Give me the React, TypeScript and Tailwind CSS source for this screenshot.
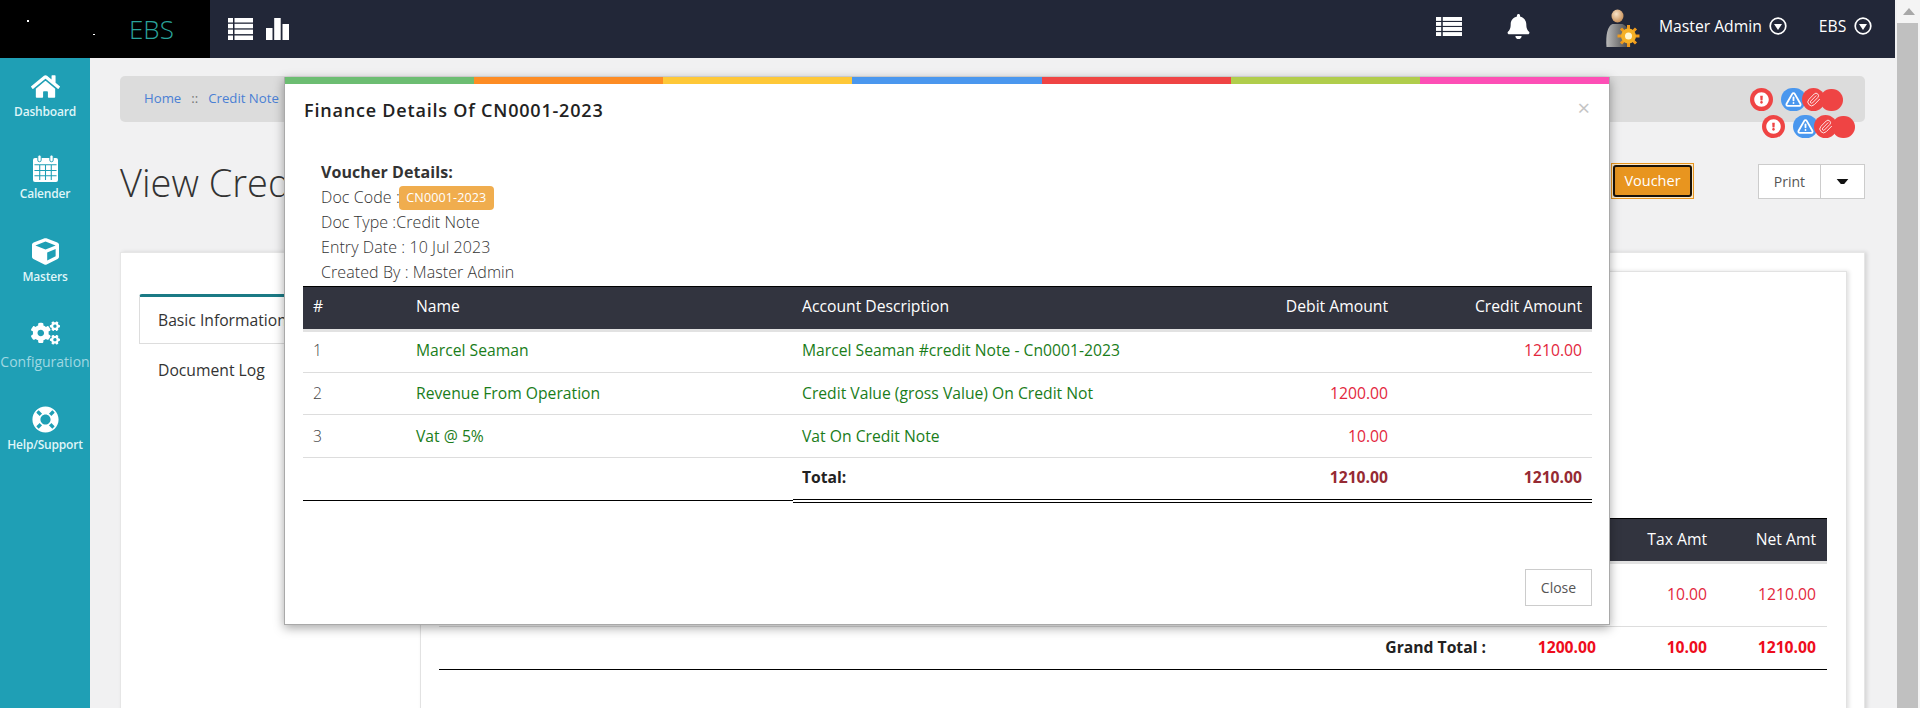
import { FaBell, FaCogs, FaCube, FaExclamationCircle, FaHome, FaLifeRing } from "react-icons/fa";
import { Paperclip, TriangleAlert } from "lucide-react";

const stripes = ["bg-[#6cbd72]", "bg-[#fd8c24]", "bg-[#fec838]", "bg-[#4a97ee]", "bg-[#ef4444]", "bg-[#b0cd4c]", "bg-[#fd4fb6]"];

const voucherRows = [
  { no: "1", name: "Marcel Seaman", desc: "Marcel Seaman #credit Note - Cn0001-2023", debit: "", credit: "1210.00", height: "h-[44px]" },
  { no: "2", name: "Revenue From Operation", desc: "Credit Value (gross Value) On Credit Not", debit: "1200.00", credit: "", height: "h-[42px]" },
  { no: "3", name: "Vat @ 5%", desc: "Vat On Credit Note", debit: "10.00", credit: "", height: "h-[43px]" },
];

function ListIcon({ className }: { className?: string }) {
  return (
    <svg viewBox="0 0 25 22" className={className} fill="currentColor" preserveAspectRatio="none">
      <rect x="0" y="0" width="5" height="4.5" />
      <rect x="6.5" y="0" width="18.5" height="4.5" />
      <rect x="0" y="5.8" width="5" height="4.5" />
      <rect x="6.5" y="5.8" width="18.5" height="4.5" />
      <rect x="0" y="11.6" width="5" height="4.5" />
      <rect x="6.5" y="11.6" width="18.5" height="4.5" />
      <rect x="0" y="17.5" width="5" height="4.5" />
      <rect x="6.5" y="17.5" width="18.5" height="4.5" />
    </svg>
  );
}

function CircleDown() {
  return (
    <svg viewBox="0 0 18 18" className="h-[18px] w-[18px] text-white">
      <circle cx="9" cy="9" r="7.8" fill="none" stroke="currentColor" strokeWidth="1.7" />
      <path d="M5 7h8l-4 6z" fill="currentColor" />
    </svg>
  );
}

function AdminAvatar() {
  return (
    <svg viewBox="0 0 35 40" className="h-10 w-[36px]">
      <defs>
        <linearGradient id="body" x1="0" y1="0" x2="1" y2="0">
          <stop offset="0" stopColor="#b9b9b9" />
          <stop offset="1" stopColor="#3f3f3f" />
        </linearGradient>
        <radialGradient id="head" cx="0.4" cy="0.35" r="0.7">
          <stop offset="0" stopColor="#f8e3c8" />
          <stop offset="1" stopColor="#c58b52" />
        </radialGradient>
      </defs>
      <ellipse cx="12" cy="7" rx="6" ry="6.5" fill="url(#head)" />
      <path d="M1 38c-1-12 1-21 6-23h10c5 2 8 8 8 23z" fill="url(#body)" />
      <g stroke="#ef9a1c" strokeWidth="3">
        <path d="M23 16v22M12 27h22M15.500 19.500l15 15M30.500 19.500l-15 15" />
      </g>
      <circle cx="23" cy="27" r="7.500" fill="#f5b026" />
      <circle cx="23" cy="27" r="3.500" fill="#fff6cf" />
    </svg>
  );
}

function NoticeDots() {
  return (
    <div className="flex h-[23px] items-center">
      <span className="flex h-[23px] w-[23px] items-center justify-center rounded-full bg-[#ef4444] text-[15px] text-white">
        <FaExclamationCircle />
      </span>
      <span className="ml-2 flex h-[23px] w-[25px] items-center justify-center rounded-full bg-[#4a97ee] text-white">
        <TriangleAlert size={17} strokeWidth={2.6} />
      </span>
      <span className="-ml-1 flex h-[23px] w-[23px] items-center justify-center rounded-full bg-[#ef4444] text-[#ffe3e3]">
        <Paperclip size={15} strokeWidth={1.6} />
      </span>
      <span className="-ml-[5px] h-[22px] w-[23px] rounded-full bg-[#ef4444]" />
    </div>
  );
}

function SideItem({ label, icon, className }: { label: string; icon: React.ReactNode; className?: string }) {
  return (
    <div className={`flex flex-col items-center ${className ?? ""}`}>
      <div className="flex h-[28px] items-center text-white">{icon}</div>
      <span className="mt-[3px] whitespace-nowrap text-[12px] font-semibold leading-[18px] tracking-[-0.2px] text-[#dff5f8]">{label}</span>
    </div>
  );
}

export default function App() {
  return (
    <div className="relative flex h-[708px] w-[1920px] overflow-hidden bg-[#f1f1f2] font-['Open_Sans',sans-serif] text-[#333]">
      <div className="flex w-[1897px] flex-col">
        {/* top bar */}
        <header className="mr-[2px] flex h-[58px] shrink-0 items-center bg-[#222738] text-white">
          <div className="relative flex h-full w-[210px] items-center bg-black pl-[129px]">
            <span className="absolute left-[27px] top-[20px] h-[2px] w-[2px] bg-white" />
            <span className="absolute left-[93px] top-[34px] h-px w-[2px] bg-white" />
            <span className="text-[26px] font-light leading-none text-[#2aa39b]">EBS</span>
          </div>
          <ListIcon className="ml-[18px] h-[22px] w-[25px]" />
          <svg viewBox="0 0 23 22" className="ml-[13px] h-[22px] w-[23px]" fill="currentColor">
            <rect x="0" y="10" width="6.500" height="12" />
            <rect x="8.200" y="0" width="6.500" height="22" />
            <rect x="16.500" y="6" width="6.500" height="16" />
          </svg>
          <ListIcon className="ml-[1147px] -mt-[6px] h-[19px] w-[26px]" />
          <FaBell className="ml-[44px] -mt-[6px] text-[25px]" />
          <div className="ml-[74px]">
            <AdminAvatar />
          </div>
          <span className="ml-[18px] -mt-[4px] text-[15.7px] leading-none">Master Admin</span>
          <div className="ml-[7px] -mt-[6px] flex">
            <CircleDown />
          </div>
          <span className="ml-[32px] -mt-[4px] text-[15.7px] leading-none">EBS</span>
          <div className="ml-[8px] -mt-[6px] flex">
            <CircleDown />
          </div>
        </header>

        <div className="flex min-h-0 flex-1">
          {/* side menu */}
          <nav className="w-[90px] shrink-0 bg-[#1f9fb5] pt-[14px]">
            <SideItem label="Dashboard" icon={<FaHome className="text-[29px]" />} />
            <SideItem className="mt-[33px]" label="Calender" icon={
              <svg viewBox="0 0 26 28" className="h-[27px] w-[25px]">
                <path d="M2 3h22a2 2 0 0 1 2 2v21a2 2 0 0 1-2 2H2a2 2 0 0 1-2-2V5a2 2 0 0 1 2-2z" fill="currentColor" />
                <rect x="5" y="0" width="3.500" height="7" rx="1.700" fill="currentColor" stroke="#1f9fb5" />
                <rect x="17.500" y="0" width="3.500" height="7" rx="1.700" fill="currentColor" stroke="#1f9fb5" />
                <path d="M1.500 10h23M1.500 16h23M1.500 21.500h23M7 10v16M13 10v16M19 10v16" stroke="#1f9fb5" strokeWidth="1.100" />
              </svg>
            } />
            <SideItem className="mt-[34px]" label="Masters" icon={<FaCube className="text-[27px]" />} />
            <div className="mt-[33px] flex flex-col items-center">
              <FaCogs className="h-[28px] text-[29px] text-white" />
              <span className="mt-[5px] whitespace-nowrap text-[14px] leading-[20px] text-[#9fd8e2]">Configuration</span>
            </div>
            <SideItem className="mt-[33px]" label="Help/Support" icon={<FaLifeRing className="text-[27px]" />} />
          </nav>

          {/* page */}
          <main className="min-w-0 flex-1 pl-[30px] pr-[32px] pt-[18px]">
            <div className="relative flex h-[46px] items-center rounded-[5px] bg-[#dcdcdc] pl-6 text-[13.2px] text-[#4a7fd4]">
              <span>Home</span>
              <span className="mx-[10px] text-[#777]">::</span>
              <span>Credit Note</span>
              <div className="absolute left-[1630px] top-[12px]">
                <NoticeDots />
              </div>
              <div className="absolute left-[1642px] top-[39px]">
                <NoticeDots />
              </div>
            </div>

            <div className="flex h-[130px] items-start justify-between pt-[41px]">
              <h1 className="mt-[-7px] text-[38px] font-light leading-[52px] text-[#333]">View Credit Note</h1>
              <div className="flex items-center">
                <div className="border border-[#e8951f] bg-[#fbe9c8] p-px">
                  <button className="flex h-[32px] w-[79px] items-center justify-center rounded-[3px] border-2 border-[#1a1208] bg-[#e8951f] text-[14.5px] text-white">
                    Voucher
                  </button>
                </div>
                <div className="ml-[64px] flex h-[35px] border border-[#ccc] bg-white text-[14px] text-[#555]">
                  <span className="flex w-[62px] items-center justify-center border-r border-[#ccc]">Print</span>
                  <span className="flex w-[43px] items-center justify-center">
                    <svg viewBox="0 0 14 6" className="h-[5px] w-[13px]"><path d="M0 0h14l-5 6H5z" fill="#111" /></svg>
                  </span>
                </div>
              </div>
            </div>

            <section className="flex h-[470px] border border-[#e6e6e6] bg-white shadow-[2px_0_4px_rgba(0,0,0,0.12)]">
              <div className="w-[299px] shrink-0 pl-[18px] pt-[41px] text-[15.7px]">
                <div className="flex h-[50px] items-center rounded-t-[3px] border border-t-[3px] border-[#ddd] border-t-[#1b7a85] pl-[18px] pt-px">
                  Basic Information
                </div>
                <div className="flex h-[52px] items-center pl-[19px] pt-px">Document Log</div>
              </div>
              <div className="mr-[17px] mt-[18px] flex-1 border-l border-r border-t border-[#e2e2e2] pl-[18px] pr-[19px] pt-[246px] shadow-[2px_0_4px_rgba(0,0,0,0.12)]">
                <table className="w-full table-fixed border-collapse text-[15.7px]">
                  <colgroup>
                    <col />
                    <col className="w-[110px]" />
                    <col className="w-[110px]" />
                    <col className="w-[111px]" />
                    <col className="w-[111px]" />
                  </colgroup>
                  <thead>
                    <tr className="h-[42px] border-t border-black bg-[#32343f] text-right text-white shadow-[0_3px_0_#e2e2e2]">
                      <th className="font-normal" />
                      <th className="font-normal" />
                      <th className="font-normal" />
                      <th className="pr-[9px] font-normal">Tax Amt</th>
                      <th className="pr-[11px] font-normal">Net Amt</th>
                    </tr>
                  </thead>
                  <tbody>
                    <tr className="h-[66px] border-b border-[#ddd] text-right font-normal text-[#e3263c]">
                      <td />
                      <td />
                      <td />
                      <td className="pr-[9px] pt-[3px]">10.00</td>
                      <td className="pr-[11px] pt-[3px]">1210.00</td>
                    </tr>
                    <tr className="h-[43px] border-b border-black text-right font-bold text-[#ee0c1c]">
                      <td />
                      <td className="whitespace-nowrap pr-[9px] text-[#222]">Grand Total :</td>
                      <td className="pr-[9px]">1200.00</td>
                      <td className="pr-[9px]">10.00</td>
                      <td className="pr-[11px]">1210.00</td>
                    </tr>
                  </tbody>
                </table>
              </div>
            </section>
          </main>
        </div>
      </div>

      {/* scrollbar */}
      <div className="flex w-[23px] flex-col bg-[#f4f4f4]">
        <div className="flex h-[23px] items-center justify-center">
          <svg viewBox="0 0 12 7" className="h-[7px] w-[12px]"><path d="M6 0l6 7H0z" fill="#a8a8a8" /></svg>
        </div>
        <div className="mr-[2px] flex-1 bg-[#c0c0c0]" />
      </div>

      {/* finance details modal */}
      <div className="absolute left-[284px] top-[77px] flex h-[548px] w-[1326px] flex-col border-x border-b border-[#a9a9a9] bg-white shadow-[0_3px_10px_rgba(0,0,0,0.35)]">
        <div className="flex h-[7px] shrink-0">
          {stripes.map((c) => (
            <div key={c} className={`flex-1 ${c}`} />
          ))}
        </div>
        <div className="flex items-start justify-between pl-[19px] pr-[19px] pt-[13px]">
          <h4 className="text-[18px] font-semibold leading-[26px] tracking-[0.8px] text-[#222]">Finance Details Of CN0001-2023</h4>
          <span className="text-[22px] leading-[20px] text-[#c4c4c4]">×</span>
        </div>
        <div className="pl-[36px] pt-[37px] text-[16px] font-light leading-[25px] tracking-[0.08px] text-[#333]">
          <div className="font-bold text-[#333]">Voucher Details:</div>
          <div className="flex items-center">
            Doc Code :
            <span className="-ml-px flex h-[24px] w-[95px] items-center justify-center rounded-[4px] bg-[#f0ad4e] text-[12.6px] font-normal text-white">CN0001-2023</span>
          </div>
          <div>Doc Type :Credit Note</div>
          <div>Entry Date : 10 Jul 2023</div>
          <div>Created By : Master Admin</div>
        </div>
        <div className="pl-[18px] pr-[17px] pt-px">
          <table className="w-full table-fixed border-collapse text-[15.7px]">
            <colgroup>
              <col className="w-[103px]" />
              <col className="w-[387px]" />
              <col />
              <col className="w-[194px]" />
              <col className="w-[194px]" />
            </colgroup>
            <thead>
              <tr className="h-[42px] border-t border-black bg-[#32343f] text-white shadow-[0_3px_0_#e2e2e2]">
                <th className="pb-[2px] pl-[10px] text-left font-normal">#</th>
                <th className="pb-[2px] pl-[10px] text-left font-normal">Name</th>
                <th className="pb-[2px] pl-[9px] text-left font-normal">Account Description</th>
                <th className="pb-[2px] pr-[10px] text-right font-normal">Debit Amount</th>
                <th className="pb-[2px] pr-[10px] text-right font-normal">Credit Amount</th>
              </tr>
            </thead>
            <tbody>
              {voucherRows.map((row) => (
                <tr key={row.no} className={`${row.height} border-b border-[#ddd] text-[#1a7d1a]`}>
                  <td className="pl-[10px] pt-px font-light text-[#444]">{row.no}</td>
                  <td className="pl-[10px] pt-px">{row.name}</td>
                  <td className="pl-[9px] pt-px">{row.desc}</td>
                  <td className="pr-[10px] pt-px text-right text-[#e3263c]">{row.debit}</td>
                  <td className="pr-[10px] pt-px text-right text-[#e3263c]">{row.credit}</td>
                </tr>
              ))}
              <tr className="h-[43px] font-bold">
                <td colSpan={2} className="border-b border-black" />
                <td className="border-b-4 border-double border-black pl-[9px] text-[#222]">Total:</td>
                <td className="border-b-4 border-double border-black pr-[10px] text-right text-[#962a33]">1210.00</td>
                <td className="border-b-4 border-double border-black pr-[10px] text-right text-[#962a33]">1210.00</td>
              </tr>
            </tbody>
          </table>
        </div>
        <div className="mt-auto flex justify-end pb-[18px] pr-[17px]">
          <button className="h-[37px] w-[67px] border border-[#ccc] text-[14px] text-[#555]">Close</button>
        </div>
      </div>
    </div>
  );
}
